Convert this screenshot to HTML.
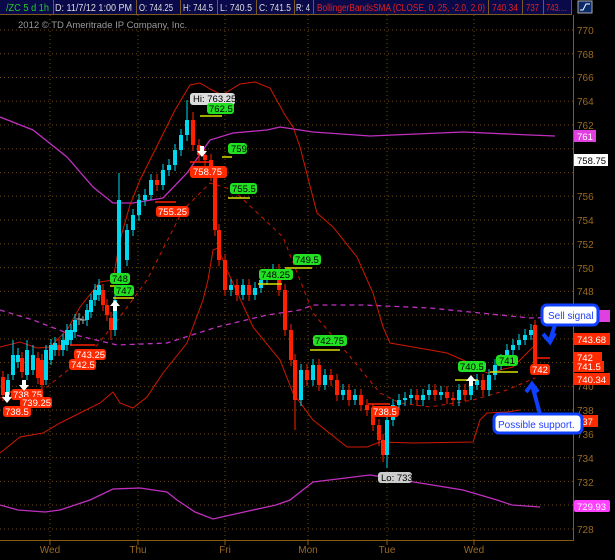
<!DOCTYPE html>
<html><head><style>
html,body{margin:0;padding:0;background:#000;width:615px;height:560px;overflow:hidden;font-family:"Liberation Sans",sans-serif}
svg{position:absolute;left:0;top:0}
</style></head><body>
<svg width="615" height="560" viewBox="0 0 615 560" font-family="Liberation Sans, sans-serif">
<rect width="615" height="560" fill="#000"/>
<!-- grid -->
<g stroke="#6b4a10" stroke-width="1" stroke-dasharray="1,3">
<line x1="0" y1="30" x2="573" y2="30"/><line x1="0" y1="53.8" x2="573" y2="53.8"/><line x1="0" y1="77.5" x2="573" y2="77.5"/><line x1="0" y1="101.3" x2="573" y2="101.3"/><line x1="0" y1="125" x2="573" y2="125"/><line x1="0" y1="148.8" x2="573" y2="148.8"/><line x1="0" y1="172.6" x2="573" y2="172.6"/><line x1="0" y1="196.3" x2="573" y2="196.3"/><line x1="0" y1="220" x2="573" y2="220"/><line x1="0" y1="243.8" x2="573" y2="243.8"/><line x1="0" y1="267.6" x2="573" y2="267.6"/><line x1="0" y1="291.4" x2="573" y2="291.4"/><line x1="0" y1="315" x2="573" y2="315"/><line x1="0" y1="338.9" x2="573" y2="338.9"/><line x1="0" y1="362.6" x2="573" y2="362.6"/><line x1="0" y1="386.4" x2="573" y2="386.4"/><line x1="0" y1="410" x2="573" y2="410"/><line x1="0" y1="433.9" x2="573" y2="433.9"/><line x1="0" y1="457.6" x2="573" y2="457.6"/><line x1="0" y1="481.4" x2="573" y2="481.4"/><line x1="0" y1="505" x2="573" y2="505"/><line x1="0" y1="529" x2="573" y2="529"/>
<line x1="50" y1="15" x2="50" y2="540"/><line x1="138" y1="15" x2="138" y2="540"/><line x1="225" y1="15" x2="225" y2="540"/><line x1="308" y1="15" x2="308" y2="540"/><line x1="387" y1="15" x2="387" y2="540"/><line x1="474" y1="15" x2="474" y2="540"/>
</g>
<line x1="0" y1="540.5" x2="574" y2="540.5" stroke="#8a5a10"/>
<line x1="573.5" y1="15" x2="573.5" y2="541" stroke="#8a5a10"/>
<g stroke="#8a5a10"><line x1="50" y1="540" x2="50" y2="545"/><line x1="138" y1="540" x2="138" y2="545"/><line x1="225" y1="540" x2="225" y2="545"/><line x1="308" y1="540" x2="308" y2="545"/><line x1="387" y1="540" x2="387" y2="545"/><line x1="474" y1="540" x2="474" y2="545"/></g>
<g fill="#9a6a20" font-size="10">
<text x="50" y="563" text-anchor="middle" dy="-10">Wed</text><text x="138" y="553" text-anchor="middle">Thu</text><text x="225" y="553" text-anchor="middle">Fri</text><text x="308" y="553" text-anchor="middle">Mon</text><text x="387" y="553" text-anchor="middle">Tue</text><text x="474" y="553" text-anchor="middle">Wed</text>
<text x="577" y="34">770</text><text x="577" y="58">768</text><text x="577" y="81">766</text><text x="577" y="105">764</text><text x="577" y="129">762</text><text x="577" y="200">756</text><text x="577" y="224">754</text><text x="577" y="248">752</text><text x="577" y="272">750</text><text x="577" y="295">748</text><text x="577" y="390">740</text><text x="577" y="414">738</text><text x="577" y="438">736</text><text x="577" y="462">734</text><text x="577" y="486">732</text><text x="577" y="533">728</text>
</g>
<text x="18" y="28" fill="#999" font-size="9.5">2012 © TD Ameritrade IP Company, Inc.</text>
<!-- magenta bands -->
<g fill="none" stroke="#c030c0" stroke-width="1.3">
<polyline points="0,117 33,130 67,157 93,187 113,203 133,203 163,198 187,173 210,140 233,133 267,130 280,127 313,132 370,136 463,132 530,135 555,136"/>
<polyline points="0,505 18,510 45,512 60,510 75,505 90,500 113,489 140,488 167,492 177,500 195,512 213,519 244,512 276,505 290,500 313,482 370,475 420,483 463,490 497,500 512,505 540,507"/>
<polyline stroke-dasharray="5,4" points="0,310 33,320 67,333 117,345 167,343 217,327 267,315 300,310 313,305 363,305 430,308 530,318 573,317"/>
</g>
<!-- bollinger red -->
<g fill="none" stroke="#d01800" stroke-width="1">
<polyline points="0,347 20,342 37,348 50,347 67,330 80,307 100,282 113,280 120,240 130,205 140,180 160,140 175,110 190,85 200,83 212,90 222,95 240,84 255,82 270,88 285,115 293,127 300,147 317,213 333,227 357,257 373,293 383,327 390,343 413,347 447,353 463,360 487,373 513,367 527,353 535,345"/>
<polyline points="0,453 20,437 43,433 60,423 80,413 100,403 113,392 120,403 133,408 147,397 163,373 187,343 203,300 208,280 213,250 218,248 227,270 253,327 280,360 293,393 313,420 347,447 367,447 380,442 413,443 473,442 480,420 487,413 507,412 520,410"/>
<polyline stroke-dasharray="4,4" points="0,398 43,390 93,350 120,317 147,280 183,210 210,183 233,190 283,237 313,313 347,353 380,393 400,403 430,407 473,400 507,390 535,378"/>
</g>
<!-- candles -->
<path fill="none" stroke="#00d8f0" stroke-width="4" d="M8 395V380M13 375V355M18 362V355M27 375V350M33 370V355M46 380V350M51 360V345M55 350V343M63 350V340M67 345V330M71 340V330M75 332V320M87 320V310M91 312V300M95 300V290M99 295V285M115 330V300M119 277V200M127 260V230M133 230V215M139 215V200M145 200V195M151 195V180M163 185V170M169 170V165M175 165V150M181 150V135M187 135V120M231 290V285M243 295V285M255 295V288M261 288V280M267 280V275M273 275V270M301 400V370M313 380V365M325 385V375M343 395V390M355 400V395M387 455V420M393 420V405M399 405V400M405 400V398M411 398V395M423 400V395M429 395V390M441 395V392M459 400V390M471 395V385M477 385V380M489 390V375M495 375V365M501 365V360M507 360V350M513 350V345M519 345V340M525 340V335M531 335V330"/>
<path fill="none" stroke="#00d8f0" stroke-width="1" d="M8 374V400M13 340V380M18 348V368M27 340V380M33 345V375M46 345V385M51 339V365M55 337V356M63 334V356M67 324V351M71 324V346M75 314V338M87 304V326M91 294V318M95 284V306M99 279V301M115 294V336M119 173V283M127 224V266M133 209V236M139 194V221M145 189V206M151 174V200M163 164V190M169 159V176M175 144V171M181 129V156M187 100V141M231 279V296M243 279V300M255 282V300M261 274V293M267 269V285M273 264V280M301 364V406M313 359V386M325 369V390M343 384V400M355 389V405M387 414V468M393 399V426M399 394V410M405 392V406M411 389V404M423 389V406M429 384V400M441 386V400M459 384V406M471 379V400M477 374V390M489 369V396M495 359V380M501 354V370M507 344V365M513 339V355M519 334V350M525 329V345M531 324V340"/>
<path fill="none" stroke="#aaa" stroke-width="1" d="M79 313V325M76 319H82M83 316V324M80 320H86"/>
<path fill="none" stroke="#ff2000" stroke-width="4" d="M3 377V395M22 358V372M38 358V378M42 360V385M59 345V350M103 290V305M107 305V315M111 318V330M157 180V185M193 120V145M199 145V155M205 155V160M211 160V175M215 175V230M219 230V260M225 260V290M237 285V295M249 285V295M279 270V290M285 290V330M291 330V360M295 360V400M307 370V380M319 365V385M331 375V380M337 380V395M349 390V400M361 395V405M367 405V410M373 410V425M379 425V440M383 440V455M417 395V400M435 390V395M447 392V398M453 398V400M465 390V395M483 380V390M535 325V368"/>
<path fill="none" stroke="#ff2000" stroke-width="1" d="M3 371V401M22 352V378M38 352V384M42 354V391M59 339V356M103 284V311M107 299V321M111 312V340M157 174V191M193 112V151M199 139V161M205 149V166M211 154V181M215 169V236M219 224V266M225 254V296M237 279V301M249 279V301M279 264V296M285 284V336M291 324V366M295 354V430M307 364V386M319 359V391M331 369V386M337 374V401M349 384V406M361 389V411M367 399V416M373 404V431M379 419V446M383 434V462M417 389V406M435 384V401M447 386V404M453 392V406M465 384V401M483 374V396M535 320V374"/>
<!-- level lines -->
<g stroke-width="1.5">
<line x1="200" y1="116" x2="222" y2="116" stroke="#d8e000"/><line x1="222" y1="157" x2="232" y2="157" stroke="#d8e000"/><line x1="228" y1="198" x2="250" y2="198" stroke="#d8e000"/><line x1="285" y1="268" x2="312" y2="268" stroke="#d8e000"/><line x1="258" y1="284" x2="282" y2="284" stroke="#d8e000"/><line x1="110" y1="286" x2="132" y2="286" stroke="#d8e000"/><line x1="113" y1="298" x2="134" y2="298" stroke="#d8e000"/><line x1="310" y1="350" x2="340" y2="350" stroke="#d8e000"/><line x1="455" y1="380" x2="478" y2="380" stroke="#d8e000"/><line x1="490" y1="372" x2="518" y2="372" stroke="#d8e000"/>
<line x1="155" y1="202" x2="176" y2="202" stroke="#ff2000"/><line x1="190" y1="162" x2="210" y2="162" stroke="#ff2000"/><line x1="70" y1="345" x2="95" y2="345" stroke="#ff2000"/><line x1="10" y1="392" x2="35" y2="392" stroke="#ff2000"/><line x1="368" y1="404" x2="390" y2="404" stroke="#ff2000"/><line x1="535" y1="358" x2="550" y2="358" stroke="#ff2000"/>
</g>
<!-- tags -->
<g font-size="9.5">
<rect x="190" y="93" width="45" height="12" rx="3" fill="#ddd"/><text x="193" y="102" fill="#000">Hi: 763.25</text>
<rect x="207" y="103" width="27" height="11" rx="3" fill="#22e022"/><text x="209" y="112" fill="#000">762.5</text>
<rect x="228" y="143" width="19" height="11" rx="3" fill="#22e022"/><text x="231" y="152" fill="#000">759</text>
<rect x="190" y="166" width="37" height="12" rx="3" fill="#ff2a00"/><text x="193" y="175" fill="#fff">758.75</text>
<rect x="230" y="183" width="27" height="11" rx="3" fill="#22e022"/><text x="232" y="192" fill="#000">755.5</text>
<rect x="156" y="206" width="33" height="11" rx="3" fill="#ff2a00"/><text x="158" y="215" fill="#fff">755.25</text>
<rect x="293" y="254" width="28" height="11" rx="3" fill="#22e022"/><text x="295" y="263" fill="#000">749.5</text>
<rect x="259" y="269" width="34" height="11" rx="3" fill="#22e022"/><text x="261" y="278" fill="#000">748.25</text>
<rect x="110" y="273" width="20" height="11" rx="3" fill="#22e022"/><text x="112" y="282" fill="#000">748</text>
<rect x="114" y="285" width="20" height="11" rx="3" fill="#22e022"/><text x="116" y="294" fill="#000">747</text>
<rect x="313" y="335" width="34" height="11" rx="3" fill="#22e022"/><text x="315" y="344" fill="#000">742.75</text>
<rect x="74" y="349" width="32" height="11" rx="3" fill="#ff2a00"/><text x="76" y="358" fill="#fff">743.25</text>
<rect x="69" y="359" width="27" height="11" rx="3" fill="#ff2a00"/><text x="71" y="368" fill="#fff">742.5</text>
<rect x="11" y="389" width="32" height="11" rx="3" fill="#ff2a00"/><text x="13" y="398" fill="#fff">738.75</text>
<rect x="20" y="397" width="32" height="11" rx="3" fill="#ff2a00"/><text x="22" y="406" fill="#fff">739.25</text>
<rect x="3" y="406" width="28" height="11" rx="3" fill="#ff2a00"/><text x="5" y="415" fill="#fff">738.5</text>
<rect x="371" y="406" width="28" height="11" rx="3" fill="#ff2a00"/><text x="373" y="415" fill="#fff">738.5</text>
<rect x="458" y="361" width="28" height="11" rx="3" fill="#22e022"/><text x="460" y="370" fill="#000">740.5</text>
<rect x="496" y="355" width="22" height="11" rx="3" fill="#22e022"/><text x="499" y="364" fill="#000">741</text>
<rect x="530" y="364" width="20" height="11" rx="3" fill="#ff2a00"/><text x="532" y="373" fill="#fff">742</text>
<rect x="378" y="472" width="34" height="11" rx="3" fill="#ccc"/><text x="381" y="481" fill="#000">Lo: 733</text>
</g>
<!-- white arrows -->
<g fill="#fff"><path d="M5 392h4v5h3l-5 6-5-6h3z"/><path d="M22 380h4v5h3l-5 6-5-6h3z"/><path d="M113 311h4v-5h3l-5-6-5 6h3z"/><path d="M200 146h4v5h3l-5 6-5-6h3z"/><path d="M469 386h4v-5h3l-5-6-5 6h3z"/></g>
<!-- right axis tags -->
<g font-size="9.5">
<rect x="574" y="130" width="22" height="12" fill="#e040e0"/><text x="577" y="140" fill="#fff">761</text>
<rect x="574" y="154" width="34" height="12" fill="#fff"/><text x="577" y="164" fill="#000">758.75</text>
<rect x="574" y="310" width="36" height="12" fill="#e040e0"/>
<rect x="574" y="333" width="36" height="12" fill="#ff2a00"/><text x="577" y="343" fill="#fff">743.68</text>
<rect x="574" y="352" width="28" height="11" fill="#ff2a00"/><text x="577" y="361" fill="#fff">742</text>
<rect x="574" y="361" width="30" height="11" fill="#ff2a00"/><text x="577" y="370" fill="#fff">741.5</text>
<rect x="574" y="373" width="36" height="12" fill="#ff2a00"/><text x="577" y="383" fill="#fff">740.34</text>
<rect x="574" y="415" width="24" height="12" fill="#ff2a00"/><text x="577" y="425" fill="#fff">737</text>
<rect x="574" y="500" width="36" height="12" rx="2" fill="#ff40ff"/><text x="577" y="510" fill="#fff">729.93</text>
</g>
<!-- callouts -->
<g stroke="#1040ff" stroke-width="3" fill="#1040ff">
<path d="M555 325 L550 340 M543 334 l7 8 5-9" fill="none" stroke-width="4"/>
<path d="M532 385 L540 414 M526 392 l6-8 6 8" fill="none" stroke-width="4"/>
<rect x="542" y="305" width="56" height="20" rx="5" fill="#fff"/>
<rect x="494" y="414" width="88" height="19" rx="5" fill="#fff"/>
</g>
<text x="548" y="319" font-size="10" fill="#2040ff">Sell signal</text>
<text x="498" y="428" font-size="10" fill="#2040ff">Possible support.</text>
<!-- top bar -->
<rect x="0" y="0" width="572" height="15" fill="#0a0a4a"/>
<g stroke="#7a5a20"><line x1="53.5" y1="0" x2="53.5" y2="15"/><line x1="136.5" y1="0" x2="136.5" y2="15"/><line x1="180.5" y1="0" x2="180.5" y2="15"/><line x1="217.5" y1="0" x2="217.5" y2="15"/><line x1="256.5" y1="0" x2="256.5" y2="15"/><line x1="294.5" y1="0" x2="294.5" y2="15"/><line x1="313.5" y1="0" x2="313.5" y2="15"/><line x1="488.5" y1="0" x2="488.5" y2="15"/><line x1="522.5" y1="0" x2="522.5" y2="15"/><line x1="543.5" y1="0" x2="543.5" y2="15"/><line x1="571.5" y1="0" x2="571.5" y2="15"/><line x1="0" y1="14.5" x2="572" y2="14.5"/></g>
<g font-size="10"><text x="6" y="11" fill="#20d020" textLength="43" lengthAdjust="spacingAndGlyphs">/ZC 5 d 1h</text><text x="55" y="11" fill="#ddd" textLength="77" lengthAdjust="spacingAndGlyphs">D: 11/7/12 1:00 PM</text><text x="139" y="11" fill="#ddd" textLength="34" lengthAdjust="spacingAndGlyphs">O: 744.25</text><text x="183" y="11" fill="#ddd" textLength="30" lengthAdjust="spacingAndGlyphs">H: 744.5</text><text x="220" y="11" fill="#ddd" textLength="32" lengthAdjust="spacingAndGlyphs">L: 740.5</text><text x="259" y="11" fill="#ddd" textLength="32" lengthAdjust="spacingAndGlyphs">C: 741.5</text><text x="296" y="11" fill="#ddd" textLength="14" lengthAdjust="spacingAndGlyphs">R: 4</text><text x="317" y="11" fill="#e02020" textLength="168" lengthAdjust="spacingAndGlyphs">BollingerBandsSMA (CLOSE, 0, 25, -2.0, 2.0)</text><text x="492" y="11" fill="#e02020" textLength="26" lengthAdjust="spacingAndGlyphs">740.34</text><text x="526" y="11" fill="#e02020" textLength="13" lengthAdjust="spacingAndGlyphs">737</text><text x="546" y="11" fill="#e02020" textLength="21" lengthAdjust="spacingAndGlyphs">743....</text></g>
<rect x="578" y="1" width="14" height="12" fill="#0a2a6a" stroke="#aaa"/><path d="M580 10h3l3-6h4" stroke="#fff" fill="none"/>
</svg>
</body></html>
